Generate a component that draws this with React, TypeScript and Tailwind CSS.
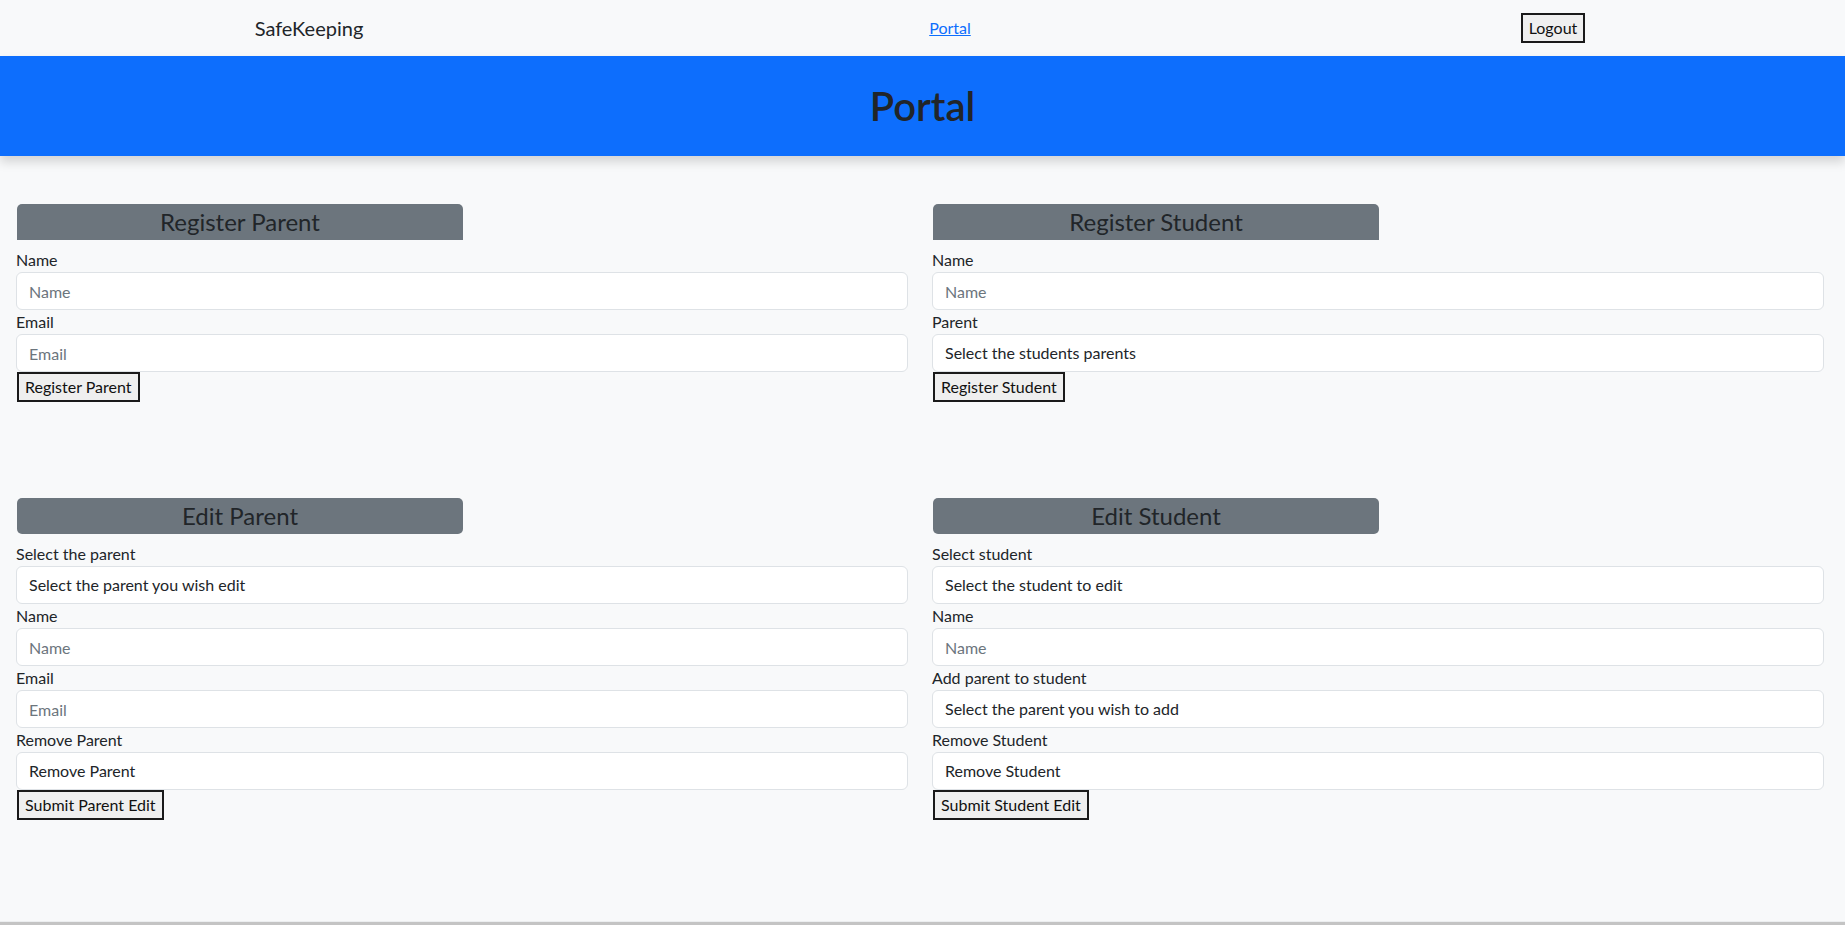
import React from "react";

const font = { fontFamily: "Lato, 'Noto Sans', sans-serif" };

function Title({ text, rounded }: { text: string; rounded: string }) {
  return (
    <div
      className={`w-1/2 ml-px h-[36px] bg-[#6c757d] text-[#212529] text-[24px] leading-[36px] text-center mb-2 ${rounded}`}
    >
      {text}
    </div>
  );
}

function Label({ text }: { text: string }) {
  return <div className="text-[16px] leading-6 text-[#212529]">{text}</div>;
}

function Input({ placeholder }: { placeholder: string }) {
  return (
    <input
      placeholder={placeholder}
      className="block w-full h-[38px] px-3 bg-white border border-[#dee2e6] rounded-[6px] text-[16px] text-[#212529] placeholder:text-[#6c757d] outline-none"
      style={font}
    />
  );
}

function Select({ text }: { text: string }) {
  return (
    <div className="w-full h-[38px] px-3 bg-white border border-[#dee2e6] rounded-[6px] text-[16px] leading-[36px] text-[#212529]">
      {text}
    </div>
  );
}

function Btn({ text }: { text: string }) {
  return (
    <button
      className="block ml-px h-[30px] px-[6px] bg-[#efefef] border-2 border-[#1a1a1a] text-[16px] leading-6 text-[#111]"
      style={font}
    >
      {text}
    </button>
  );
}

export default function App() {
  return (
    <div className="min-h-screen bg-[#f8f9fa] flex flex-col" style={font}>
      <nav className="h-[56px] bg-[#f8f9fa] grid grid-cols-[618px_664px_542px] items-center">
        <div className="text-center text-[20px] text-[#212529]">SafeKeeping</div>
        <div className="text-center">
          <a href="#" className="text-[16px] text-[#0d6efd] underline">
            Portal
          </a>
        </div>
        <div className="flex justify-center">
          <button
            className="h-[30px] px-[6px] bg-[#efefef] border-2 border-[#1a1a1a] text-[16px] leading-6 text-[#111]"
            style={font}
          >
            Logout
          </button>
        </div>
      </nav>
      <header className="h-[100px] bg-[#0d6efd] flex items-center justify-center shadow-[0_6px_10px_rgba(0,0,0,0.15)]">
        <h1 className="text-[40px] font-semibold text-[#212529]">Portal</h1>
      </header>
      <main className="grid grid-cols-2 gap-x-6 pl-4 pr-[21px]">
        <section className="my-12">
          <Title text="Register Parent" rounded="rounded-t-[5px]" />
          <Label text="Name" />
          <Input placeholder="Name" />
          <Label text="Email" />
          <Input placeholder="Email" />
          <Btn text="Register Parent" />
        </section>
        <section className="my-12">
          <Title text="Register Student" rounded="rounded-t-[5px]" />
          <Label text="Name" />
          <Input placeholder="Name" />
          <Label text="Parent" />
          <Select text="Select the students parents" />
          <Btn text="Register Student" />
        </section>
        <section className="my-12">
          <Title text="Edit Parent" rounded="rounded-[5px]" />
          <Label text="Select the parent" />
          <Select text="Select the parent you wish edit" />
          <Label text="Name" />
          <Input placeholder="Name" />
          <Label text="Email" />
          <Input placeholder="Email" />
          <Label text="Remove Parent" />
          <Select text="Remove Parent" />
          <Btn text="Submit Parent Edit" />
        </section>
        <section className="my-12">
          <Title text="Edit Student" rounded="rounded-[5px]" />
          <Label text="Select student" />
          <Select text="Select the student to edit" />
          <Label text="Name" />
          <Input placeholder="Name" />
          <Label text="Add parent to student" />
          <Select text="Select the parent you wish to add" />
          <Label text="Remove Student" />
          <Select text="Remove Student" />
          <Btn text="Submit Student Edit" />
        </section>
      </main>
      <div className="flex-1" />
      <div className="h-[1px] bg-[#eceef0]" />
      <div className="h-[3px] bg-[#c4c4c4]" />
    </div>
  );
}
